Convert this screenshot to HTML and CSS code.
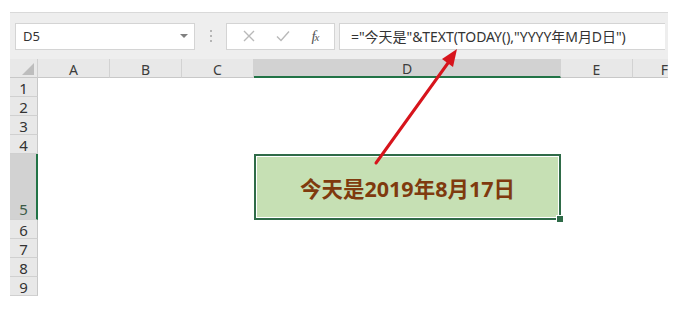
FILE: index.html
```html
<!DOCTYPE html>
<html lang="zh-CN">
<head>
  <meta charset="UTF-8">
  <title>Excel TEXT TODAY</title>
  <link rel="stylesheet" href="styles.css">
</head>
<body>
  <div id="sheet">
    <div id="toolbar">
      <div id="name-box">
        <span>D5</span>
        <span class="caret"></span>
      </div>
      <div class="grip"><i></i><i></i><i></i></div>
      <div id="fx-buttons">
        <svg width="12" height="12" viewBox="0 0 12 12"><path d="M1 1L11 11M11 1L1 11" stroke="#b9b9b9" stroke-width="1.4" fill="none"/></svg>
        <svg width="14" height="12" viewBox="0 0 14 12"><path d="M1 6.5L5 10.5L13 1.5" stroke="#b9b9b9" stroke-width="1.4" fill="none"/></svg>
        <span class="fx">f<span>x</span></span>
      </div>
      <div id="formula">="今天是"&amp;TEXT(TODAY(),"YYYY年M月D日")</div>
    </div>

    <div class="row col-heads">
      <div class="corner"><span></span></div>
      <div class="ch">A</div>
      <div class="ch">B</div>
      <div class="ch">C</div>
      <div class="ch wide active">D</div>
      <div class="ch">E</div>
      <div class="ch narrow">F</div>
    </div>

    <div class="row"><div class="rh">1</div></div>
    <div class="row"><div class="rh">2</div></div>
    <div class="row"><div class="rh">3</div></div>
    <div class="row"><div class="rh">4</div></div>
    <div class="row tall">
      <div class="rh active">5</div>
      <div class="cell"></div>
      <div class="cell"></div>
      <div class="cell"></div>
      <div class="cell wide selected">
        今天是2019年8月17日
        <span class="handle"></span>
      </div>
    </div>
    <div class="row"><div class="rh">6</div></div>
    <div class="row"><div class="rh">7</div></div>
    <div class="row"><div class="rh">8</div></div>
    <div class="row"><div class="rh">9</div></div>
  </div>

  <svg id="arrow" width="678" height="318" viewBox="0 0 678 318">
    <line x1="376" y1="163" x2="448" y2="63" stroke="#d7141c" stroke-width="3" stroke-linecap="round"/>
    <polygon points="457,49 453,67 442,59" fill="#d7141c"/>
  </svg>
</body>
</html>
```

FILE: styles.css
```css
body {
  margin: 0;
  background: #ffffff;
  font-family: "Noto Sans", "Noto Sans CJK SC", sans-serif;
  position: relative;
  width: 678px;
  height: 318px;
  overflow: hidden;
}

#sheet {
  margin: 12px 0 0 10px;
  width: 658px;
}

#toolbar {
  display: flex;
  align-items: center;
  height: 47px;
  padding: 0 3px 0 5px;
  background: #eeeeee;
  border-top: 1px solid #d9d9d9;
  box-sizing: border-box;
}

#name-box {
  width: 180px;
  height: 27px;
  background: #ffffff;
  border: 1px solid #d4d4d4;
  box-sizing: border-box;
  display: flex;
  align-items: center;
  justify-content: space-between;
  padding: 0 6px 0 7px;
  font-size: 13px;
  color: #333;
}

.caret {
  width: 0;
  height: 0;
  border-left: 4px solid transparent;
  border-right: 4px solid transparent;
  border-top: 4px solid #808080;
}

.grip {
  width: 31px;
  display: flex;
  flex-direction: column;
  align-items: center;
  gap: 3px;
}

.grip i {
  width: 2px;
  height: 2px;
  background: #b5b5b5;
}

#fx-buttons {
  width: 109px;
  height: 27px;
  background: #ffffff;
  border: 1px solid #d4d4d4;
  box-sizing: border-box;
  display: flex;
  align-items: center;
  justify-content: space-around;
  padding: 0 4px 0 6px;
}

.fx {
  font-family: "Liberation Serif", serif;
  font-style: italic;
  font-size: 15px;
  color: #555;
}

.fx span {
  font-size: 11px;
  margin-left: -1px;
}

#formula {
  flex: 1;
  margin-left: 4px;
  height: 27px;
  background: #ffffff;
  border: 1px solid #d4d4d4;
  border-right: none;
  box-sizing: border-box;
  display: flex;
  align-items: center;
  padding-left: 11px;
  font-size: 14px;
  color: #333;
  white-space: nowrap;
  letter-spacing: -0.05px;
}

.row {
  display: flex;
  height: 19px;
}

.row.tall {
  height: 66px;
}

.col-heads {
  height: 19px;
  background: #e8e8e8;
}

.corner {
  width: 28px;
  border-right: 1px solid #cfcfcf;
  border-bottom: 1px solid #c8c8c8;
  box-sizing: border-box;
  position: relative;
}

.corner span {
  position: absolute;
  right: 3px;
  bottom: 2px;
  width: 0;
  height: 0;
  border-left: 12px solid transparent;
  border-bottom: 12px solid #bdbdbd;
}

.ch {
  width: 72px;
  border-right: 1px solid #d2d2d2;
  border-bottom: 1px solid #c8c8c8;
  box-sizing: border-box;
  text-align: center;
  font-size: 14px;
  line-height: 21px;
  color: #3c3c3c;
}

.ch.wide,
.cell.wide {
  width: 307px;
}

.ch.narrow {
  width: 35px;
  text-align: right;
  border-right: none;
}

.ch.active {
  background: #d2d2d2;
  border-bottom: 2px solid #217346;
  line-height: 20px;
}

.rh {
  width: 28px;
  flex: none;
  background: #e8e8e8;
  border-right: 1px solid #c8c8c8;
  border-bottom: 1px solid #d0d0d0;
  box-sizing: border-box;
  text-align: center;
  font-size: 15px;
  line-height: 20px;
  color: #333;
}

.rh.active {
  background: #d2d2d2;
  border-right: 2px solid #217346;
  display: flex;
  align-items: flex-end;
  justify-content: center;
  padding-left: 1px;
  color: #3b5a46;
}

.cell {
  width: 72px;
  box-sizing: border-box;
}

.cell.selected {
  position: relative;
  background: #c6e0b4;
  border: 2px solid #2f6b48;
  box-shadow: inset 0 0 0 1px #ffffff;
  display: flex;
  align-items: center;
  justify-content: center;
  font-size: 21.5px;
  font-weight: bold;
  color: #7f3a0e;
}

.handle {
  position: absolute;
  right: -5px;
  bottom: -5px;
  width: 6px;
  height: 6px;
  background: #2f6b48;
  border: 1px solid #ffffff;
}

#arrow {
  position: absolute;
  top: 0;
  left: 0;
  pointer-events: none;
}
```
